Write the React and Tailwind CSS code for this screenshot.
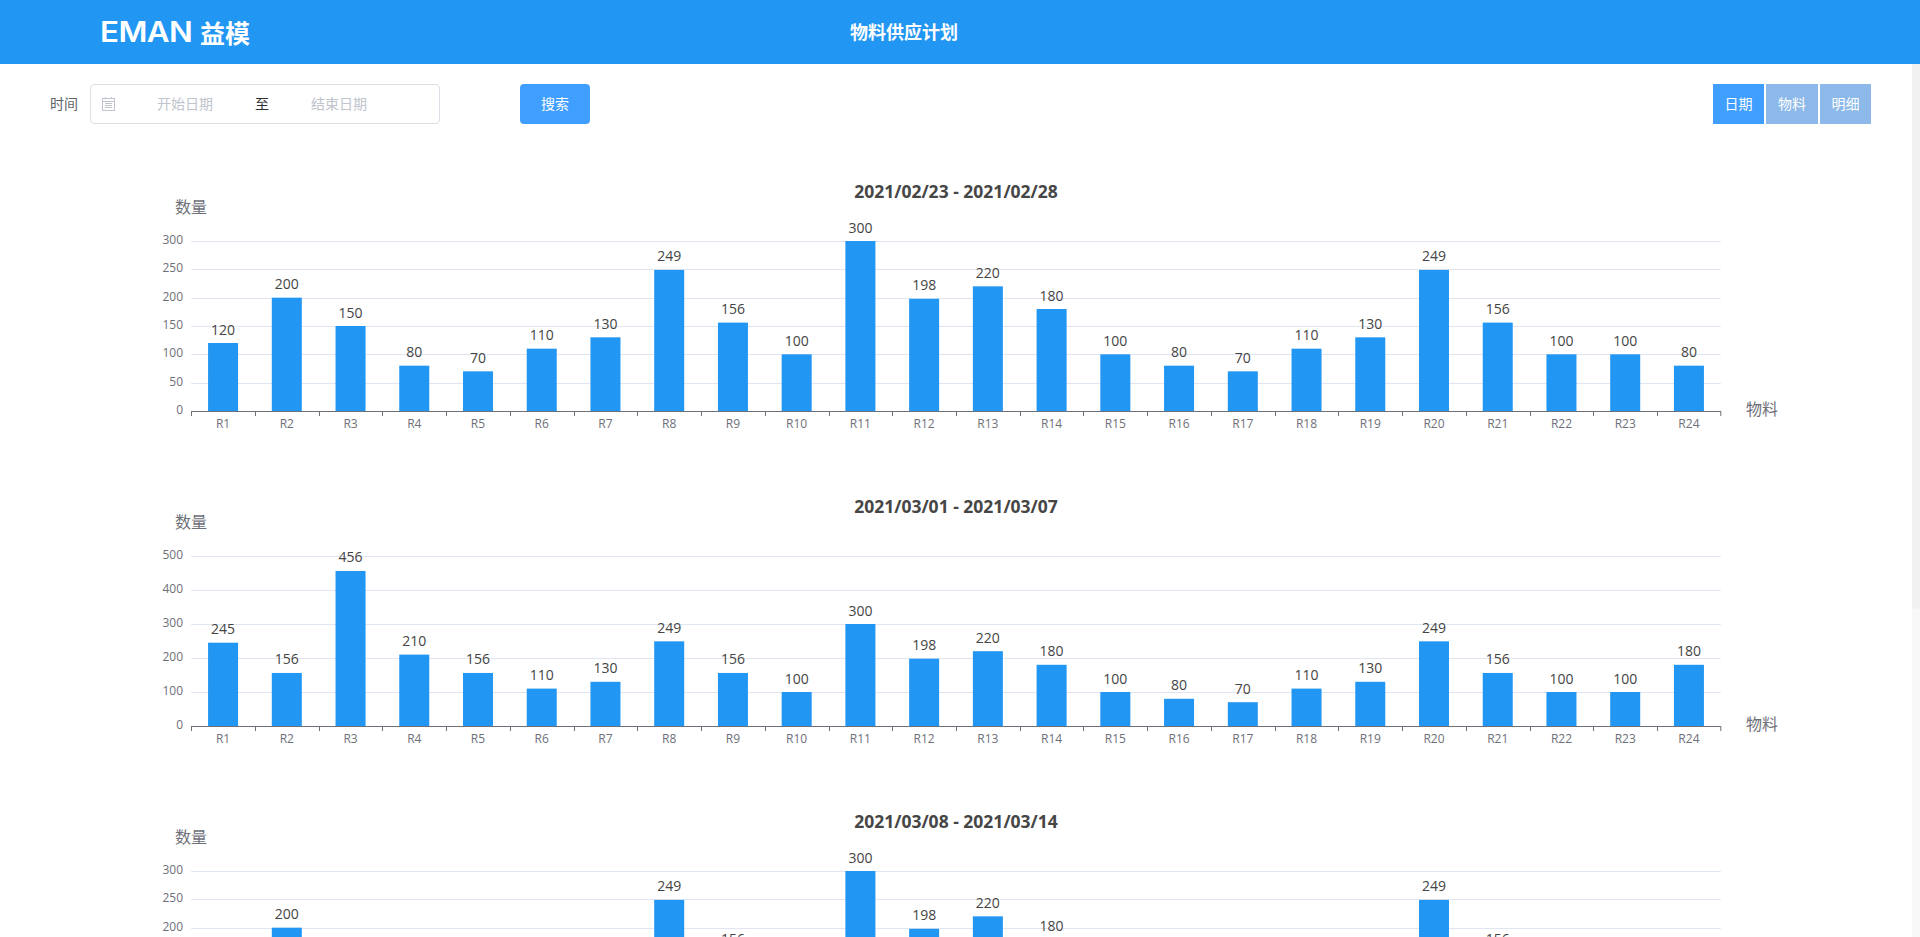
import React from 'react';

const FONT = '"Open Sans", "Noto Sans CJK SC", sans-serif';

const CHARTS = [
  {
    title: '2021/02/23 - 2021/02/28',
    max: 300,
    step: 50,
    data: [120, 200, 150, 80, 70, 110, 130, 249, 156, 100, 300, 198, 220, 180, 100, 80, 70, 110, 130, 249, 156, 100, 100, 80],
  },
  {
    title: '2021/03/01 - 2021/03/07',
    max: 500,
    step: 100,
    data: [245, 156, 456, 210, 156, 110, 130, 249, 156, 100, 300, 198, 220, 180, 100, 80, 70, 110, 130, 249, 156, 100, 100, 180],
  },
  {
    title: '2021/03/08 - 2021/03/14',
    max: 300,
    step: 50,
    data: [120, 200, 150, 80, 70, 110, 130, 249, 156, 100, 300, 198, 220, 180, 100, 80, 70, 110, 130, 249, 156, 100, 100, 80],
  },
];

const LEFT = 191.2;
const RIGHT = 1720.8;
const TOP = 96;
const BOTTOM = 266;

const BarChart = ({ title, max, step, data }) => {
  const band = (RIGHT - LEFT) / data.length;
  const ticks = [];
  for (let v = 0; v <= max; v += step) ticks.push(v);
  const yOf = (v) => BOTTOM - (v / max) * (BOTTOM - TOP);

  return (
    <svg width="1912" height="315" className="block shrink-0" style={{ fontFamily: FONT }}>
      <text x="956" y="53" textAnchor="middle" fontSize="17.5" fontWeight="700" fill="#464646">{title}</text>
      <text x="175" y="68" fontSize="16" fill="#6e7079">数量</text>
      <text x="1746" y="270" fontSize="16" fill="#6e7079">物料</text>

      {ticks.map((v) => (
        <g key={v}>
          {v > 0 && <line x1={LEFT} x2={RIGHT} y1={Math.round(yOf(v)) + 0.5} y2={Math.round(yOf(v)) + 0.5} stroke="#e0e6f1" />}
          <text x="183" y={yOf(v) + 3} textAnchor="end" fontSize="12" fill="#6e7079">{v}</text>
        </g>
      ))}

      {data.map((v, i) => {
        const cx = LEFT + band * (i + 0.5);
        return (
          <g key={i}>
            <rect x={cx - 15} y={yOf(v)} width="30" height={BOTTOM - yOf(v)} fill="#2196f3" />
            <text x={cx} y={yOf(v) - 8.5} textAnchor="middle" fontSize="14" fill="#444444">{v}</text>
            <text x={cx} y={BOTTOM + 17} textAnchor="middle" fontSize="12" fill="#6e7079">{`R${i + 1}`}</text>
          </g>
        );
      })}

      <line x1={LEFT} x2={RIGHT} y1={BOTTOM + 0.5} y2={BOTTOM + 0.5} stroke="#6e7079" />
      {data.map((_, i) => (
        <line key={i} x1={Math.round(LEFT + band * i) + 0.5} x2={Math.round(LEFT + band * i) + 0.5} y1={BOTTOM} y2={BOTTOM + 5} stroke="#6e7079" />
      ))}
      <line x1={RIGHT} x2={RIGHT} y1={BOTTOM} y2={BOTTOM + 5} stroke="#6e7079" />
    </svg>
  );
};

const CalendarIcon = () => (
  <svg width="13" height="14" viewBox="0 0 13 14" fill="none" stroke="#c0c4cc" strokeWidth="1" className="shrink-0">
    <rect x="0.5" y="1.5" width="12" height="12" />
    <path d="M0.5 4.5h12M3 6.5h7M3 8.5h7M3 10.5h7M3.5 0v2M9.5 0v2" />
  </svg>
);

const App = () => {
  return (
    <div className="h-screen flex flex-col overflow-hidden bg-white" style={{ fontFamily: FONT }}>
      <header className="h-16 shrink-0 bg-[#2196f3] flex items-center pl-[100px] text-white">
        <div className="w-[750px] flex items-center">
          <span className="w-[102px] origin-left scale-x-[1.12] font-['Inter'] text-[28px] font-semibold leading-none tracking-[-0.5px]">EMAN</span>
          <span className="-ml-[2px] text-[25px] leading-none font-bold font-['Noto_Sans_CJK_SC']">益模</span>
        </div>
        <h1 className="text-lg font-bold">物料供应计划</h1>
      </header>

      <div className="flex-1 min-h-0 flex">
        <main className="flex-1 min-w-0 overflow-hidden">
          <div className="flex items-center h-10 mt-5 mb-[21px] pl-[50px] pr-[41px] text-sm">
            <span className="text-[#606266] mr-3">时间</span>
            <div className="w-[350px] h-10 flex items-center pl-[11px] border border-[#dcdfe6] rounded text-[#c0c4cc]">
              <CalendarIcon />
              <span className="w-[140px] text-center">开始日期</span>
              <span className="text-[#303133]">至</span>
              <span className="w-[140px] text-center">结束日期</span>
            </div>
            <button className="ml-20 w-[70px] h-10 bg-[#409eff] rounded text-white">搜索</button>
            <div className="ml-auto flex gap-[2px] text-white">
              <button className="w-[51px] h-10 bg-[#409eff]">日期</button>
              <button className="w-[52px] h-10 bg-[#8cb9e9]">物料</button>
              <button className="w-[51px] h-10 bg-[#8cb9e9]">明细</button>
            </div>
          </div>

          {CHARTS.map((chart) => (
            <BarChart key={chart.title} {...chart} />
          ))}
        </main>

        <div className="w-2 shrink-0 bg-[#f8f8f8]">
          <div className="h-[545px] bg-[#f0f0f0] rounded-b-md" />
        </div>
      </div>
    </div>
  );
};

export default App;
